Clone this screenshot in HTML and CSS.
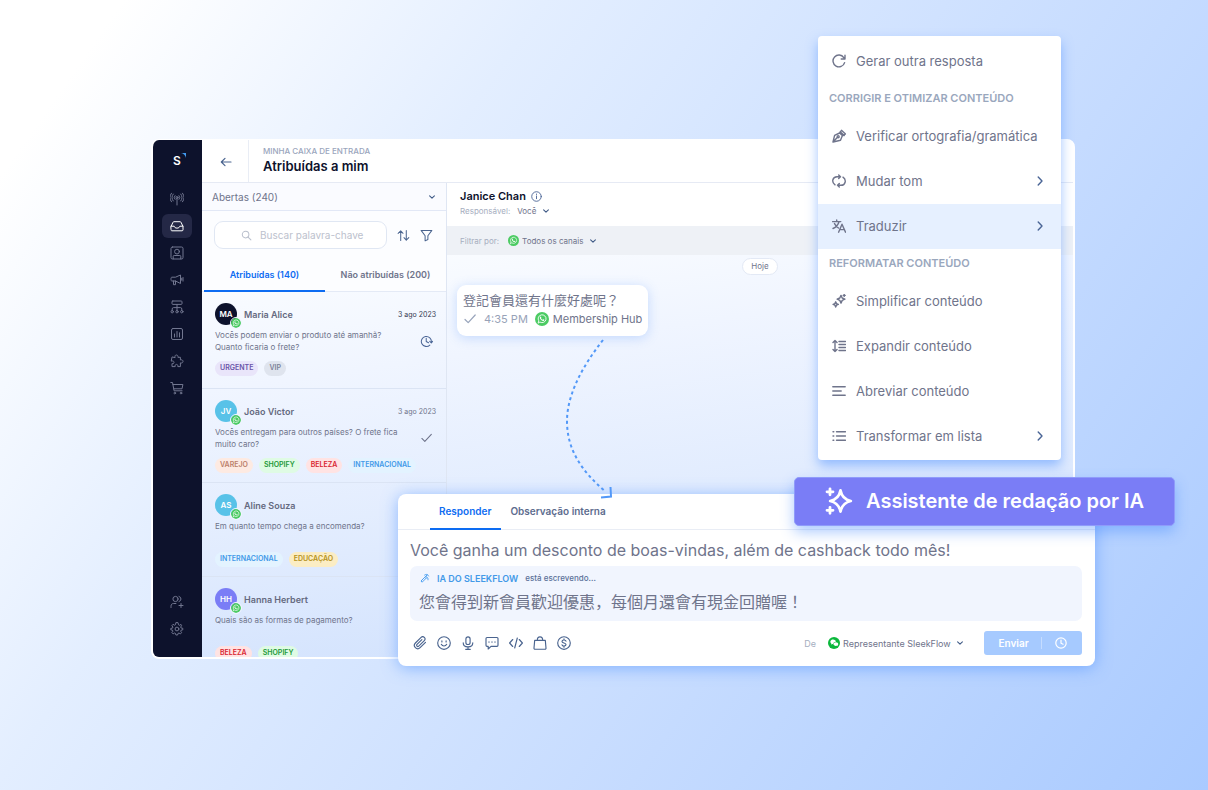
FILE: index.html
```html
<!DOCTYPE html>
<html lang="pt-BR">
<head>
<meta charset="utf-8">
<meta name="viewport" content="width=device-width, initial-scale=1">
<title>Minha caixa de entrada</title>
<link rel="stylesheet" href="styles.css">
</head>
<body>
<svg class="sprite" aria-hidden="true">
  <defs>
    <symbol id="chev-down" viewBox="0 0 8 8"><path d="M1.600 2.900 4 5.200l2.400-2.300"/></symbol>
    <symbol id="chev-right" viewBox="0 0 10 12"><path d="m3.200 2 3.800 4-3.800 4"/></symbol>
    <symbol id="check" viewBox="0 0 14 12"><path d="m2 6.500 3.200 3.200L12.200 2"/></symbol>
    <symbol id="whatsapp" viewBox="0 0 16 16"><circle cx="8" cy="8" r="8" fill="#4ccb63"/><path d="M3.700 12.300l.6-2.200a4.500 4.500 0 1 1 1.700 1.600z" fill="none" stroke="#fff" stroke-width="1"/><path d="M6.100 5.400c.5-.4.8 0 1.100.9.1.3-.4.6-.3.8.4.9 1.100 1.500 1.900 1.800.3.100.6-.6.9-.5.900.400 1.200.6.8 1.200-.6.8-1.600.7-2.700.1-1.200-.7-2.200-1.900-2.300-3 0-.6.2-1 .6-1.300z" fill="#fff"/></symbol>
    <symbol id="clock-next" viewBox="0 0 14 14"><path d="M10.600 10.800A5.400 5.400 0 1 1 12.200 7.600M6.700 3.600V7l2.500 1.400M10.500 6.800l1.700 1.700 1.500-1.800"/></symbol>
  </defs>
</svg>

<main class="scene">
  <div class="workspace">
    <section class="window">
      <nav class="rail" aria-label="Principal">
        <div class="logo"><span>S</span><svg viewBox="0 0 6 6"><path d="M0 0h6v6C5.500 3 3 .5 0 0z" fill="#419af0"/></svg></div>
        <button class="rail-btn" aria-label="Transmissões"><svg viewBox="0 0 14 14"><path d="M3.300 2a5 5 0 0 0 0 7M1.500 1.200a7 7 0 0 0 0 8.600M10.700 2a5 5 0 0 1 0 7M12.500 1.200a7 7 0 0 1 0 8.600M5 3.600a2.700 2.700 0 0 0 0 3.800M9 3.600a2.700 2.700 0 0 1 0 3.800M7 6.500V13"/><circle cx="7" cy="5.500" r="1"/></svg></button>
        <button class="rail-btn active" aria-label="Caixa de entrada"><svg viewBox="0 0 14 14"><path d="M1 7.500 3 3.300c.2-.4.5-.6 1-.6h6c.5 0 .8.200 1 .6l2 4.200v3.300c0 .7-.4 1-1 1H2c-.6 0-1-.3-1-1zM1 7.200h3.200c.2 1.200 1.200 1.900 2.800 1.900s2.600-.7 2.800-1.900H13"/></svg></button>
        <button class="rail-btn" aria-label="Contatos"><svg viewBox="0 0 14 14"><rect x="1" y="1" width="12" height="12" rx="1.500"/><circle cx="7" cy="5.600" r="2.400"/><path d="M3.200 12.800v-2.300c0-.7.3-1 1-1h5.600c.7 0 1 .3 1 1v2.300"/></svg></button>
        <button class="rail-btn" aria-label="Campanhas"><svg viewBox="0 0 14 14"><path d="M1 5.200c0-.6.4-1 1-1h3.500L10.500 2v8.500L5.500 8H2c-.6 0-1-.4-1-1zM3.500 8v3.700h2V8M10.500 5.300h1.300v1.800h-1.300M13 4.500v3.600"/></svg></button>
        <button class="rail-btn" aria-label="Fluxos"><svg viewBox="0 0 14 14"><rect x="2" y="1" width="10" height="3.400" rx=".8"/><path d="M7 4.400v6M2.200 10.500V9c0-.9.4-1.400 1.300-1.400h7c.9 0 1.300.5 1.300 1.400v1.500"/><circle cx="2.200" cy="11.700" r="1.200"/><circle cx="7" cy="11.700" r="1.200"/><circle cx="11.800" cy="11.700" r="1.200"/></svg></button>
        <button class="rail-btn" aria-label="Relatórios"><svg viewBox="0 0 14 14"><rect x="1.500" y="1.500" width="11" height="11" rx="1.500"/><path d="M4.500 10V7M7 10V4.500M9.500 10V5.800"/></svg></button>
        <button class="rail-btn" aria-label="Integrações"><svg viewBox="0 0 14 14"><path d="M5 3.300C4.600 1.900 5.300 1 6.400 1s1.900.9 1.500 2.300h2.500v2.600c1.500-.4 2.600.3 2.600 1.500s-1.100 1.900-2.600 1.500v3.700H7.800c.3-1.300-.2-2.200-1.300-2.200s-1.700.9-1.300 2.200H2v-3c1.400.4 2-.3 2-1.300S3.100 6.700 1.200 7.100L2 3.300z"/></svg></button>
        <button class="rail-btn" aria-label="Comércio"><svg viewBox="0 0 14 14"><path d="M.8 1.500h1.700l1.600 8.300h8M3 3.500h9.900l-.9 4.300H3.800"/><circle cx="4.800" cy="12.100" r=".8"/><circle cx="11" cy="12.100" r=".8"/></svg></button>
        <span class="rail-space"></span>
        <button class="rail-btn" aria-label="Convidar"><svg viewBox="0 0 14 14"><circle cx="5.500" cy="4" r="2.600"/><path d="M1 12.500v-1.200c0-1.900 1-2.800 2.700-2.800h2.200M9 1.400a2.700 2.700 0 0 1 0 5.200M11 8.500v4M9 10.500h4"/></svg></button>
        <button class="rail-btn" aria-label="Configurações"><svg viewBox="0 0 14 14"><path d="m5.800 1-.3 1.700-1 .5L3 2.300 1.900 3.700l1 1.400-.4 1L.8 6.400v1.400l1.700.4.4 1-1 1.400 1.200 1.300 1.500-.9.900.4.400 1.600h1.700l.4-1.600 1-.4 1.400.9 1.200-1.200-.9-1.500.4-1 1.700-.4V6.300l-1.700-.3-.4-1 .9-1.400L11 2.400l-1.400.9-1.100-.5L8.100 1z"/><circle cx="7" cy="7" r="1.900"/></svg></button>
      </nav>

      <div class="main">
        <header class="topbar">
          <button class="back" aria-label="Voltar"><svg viewBox="0 0 12 10"><path d="M11 5H1.500M5 1.300 1.300 5 5 8.700"/></svg></button>
          <div class="title"><span class="eyebrow">MINHA CAIXA DE ENTRADA</span><h1>Atribuídas a mim</h1></div>
        </header>
        <div class="columns">
          <aside class="inbox">
            <label class="status"><select aria-label="Estado"><option>Abertas (240)</option></select><svg class="chev"><use href="#chev-down"/></svg></label>
            <div class="tools">
              <label class="search"><svg viewBox="0 0 12 12"><circle cx="5" cy="5" r="3.600"/><path d="m7.700 7.700 3.100 3.100"/></svg><input type="search" aria-label="Buscar" placeholder="Buscar palavra-chave"></label>
              <button class="tool" aria-label="Ordenar"><svg viewBox="0 0 14 14"><path d="M4 12.500V2M1.200 4.800 4 2l2.500 2.600M10 1.500V12M7.500 9.400 10 12l2.700-2.800"/></svg></button>
              <button class="tool" aria-label="Filtrar"><svg viewBox="0 0 14 14"><path d="M1.200 1.500h11.600L8.500 7.200v4.100L5.500 12.800V7.200z"/></svg></button>
            </div>
            <div class="tabs" role="tablist"><button class="tab on" role="tab">Atribuídas (140)</button><button class="tab" role="tab">Não atribuídas (200)</button></div>
            <div class="list">
              <article class="item unread">
                <div class="who"><span class="avatar navy">MA<svg class="badge"><use href="#whatsapp"/></svg></span><h2>Maria Alice</h2><time>3 ago 2023</time></div>
                <div class="preview"><p>Vocês podem enviar o produto até amanhã?<br>Quanto ficaria o frete?</p><svg class="state"><use href="#clock-next"/></svg></div>
                <div class="tags"><span class="tag purple">URGENTE</span><span class="tag gray">VIP</span></div>
              </article>
              <article class="item">
                <div class="who"><span class="avatar cyan">JV<svg class="badge"><use href="#whatsapp"/></svg></span><h2>João Victor</h2><time>3 ago 2023</time></div>
                <div class="preview"><p>Vocês entregam para outros países? O frete fica<br>muito caro?</p><svg class="state slate"><use href="#check"/></svg></div>
                <div class="tags"><span class="tag orange">VAREJO</span><span class="tag green">SHOPIFY</span><span class="tag red">BELEZA</span><span class="tag blue">INTERNACIONAL</span></div>
              </article>
              <article class="item">
                <div class="who"><span class="avatar cyan">AS<svg class="badge"><use href="#whatsapp"/></svg></span><h2>Aline Souza</h2></div>
                <div class="preview"><p>Em quanto tempo chega a encomenda?</p></div>
                <div class="tags"><span class="tag blue">INTERNACIONAL</span><span class="tag yellow">EDUCAÇÃO</span></div>
              </article>
              <article class="item">
                <div class="who"><span class="avatar violet">HH<svg class="badge"><use href="#whatsapp"/></svg></span><h2>Hanna Herbert</h2></div>
                <div class="preview"><p>Quais são as formas de pagamento?</p></div>
                <div class="tags"><span class="tag red">BELEZA</span><span class="tag green">SHOPIFY</span></div>
              </article>
            </div>
          </aside>

          <section class="chat">
            <header class="chat-head">
              <div class="person"><h2>Janice Chan</h2><svg viewBox="0 0 12 12"><circle cx="6" cy="6" r="5.200"/><path d="M6 5.400v3M6 3.300v.5"/></svg></div>
              <label class="pick"><span>Responsável:</span><select><option>Você</option></select><svg class="chev"><use href="#chev-down"/></svg></label>
            </header>
            <label class="pick filter"><span>Filtrar por:</span><svg class="wa"><use href="#whatsapp"/></svg><select><option>Todos os canais</option></select><svg class="chev"><use href="#chev-down"/></svg></label>
            <div class="thread">
              <span class="day">Hoje</span>
              <article class="bubble">
                <p lang="zh-Hant">登記會員還有什麼好處呢？</p>
                <div class="meta"><svg class="tick"><use href="#check"/></svg><time>4:35 PM</time><svg class="wa"><use href="#whatsapp"/></svg><span>Membership Hub</span></div>
              </article>
            </div>
          </section>
        </div>
      </div>
    </section>

    <svg class="flow" viewBox="0 0 60 170" aria-hidden="true"><path d="M44 6C22 34 8 62 8 87c0 28 14 50 39 71" stroke-dasharray="3 3"/><path d="M42 163.500 52 162.500 51.500 153"/></svg>

    <section class="composer">
      <div class="ctabs" role="tablist"><button class="ctab on" role="tab">Responder</button><button class="ctab" role="tab">Observação interna</button></div>
      <div class="cbody">
        <input class="message" aria-label="Mensagem" value="Você ganha um desconto de boas-vindas, além de cashback todo mês!">
        <div class="draft">
          <div class="ai"><svg viewBox="0 0 12 12"><path d="m1.500 9.300 4.200-4.200 1.400 1.400-4.200 4.200zM5.800 5 7 3.800l1.400 1.400-1.200 1.200M5.500 2.500C7 1.200 9 1.200 10.300 3.600M8.400 5.200c1.200.8 1.300 1.600 1.200 3M7 3.800l1.800-1.700"/></svg><strong>IA DO SLEEKFLOW</strong><span>está escrevendo...</span></div>
          <p>您會得到新會員歡迎優惠，每個月還會有現金回贈喔！</p>
        </div>
        <div class="bar">
          <div class="icons">
            <button aria-label="Anexar"><svg viewBox="0 0 14 14"><path d="m12.500 6.300-5.400 5.400a3.300 3.300 0 0 1-4.700-4.700l5.700-5.600a2.200 2.200 0 0 1 3.200 3.200l-5.600 5.500a1.200 1.200 0 0 1-1.700-1.700l4.900-4.800"/></svg></button>
            <button aria-label="Emoji"><svg viewBox="0 0 14 14"><circle cx="7" cy="7" r="6.300"/><path d="M4.300 8.300c1.200 2.300 4.200 2.300 5.400 0M4.900 4.900v1M9.100 4.900v1"/></svg></button>
            <button aria-label="Áudio"><svg viewBox="0 0 14 14"><rect x="4.900" y=".8" width="4.200" height="7.700" rx="2.100"/><path d="M2.200 6.800c0 5.500 9.600 5.500 9.600 0M7 11v2.300M4.700 13.300h4.600"/></svg></button>
            <button aria-label="Resposta rápida"><svg viewBox="0 0 14 14"><path d="M2 1.500h10c.6 0 1 .4 1 1v6.800c0 .6-.4 1-1 1H6L3.200 13v-2.700H2c-.6 0-1-.4-1-1V2.500c0-.6.4-1 1-1zM4 5.700v.5M7 5.700v.5M10 5.700v.5"/></svg></button>
            <button aria-label="Código"><svg viewBox="0 0 14 14"><path d="M3.700 3.500.6 7l3.100 3.500M10.300 3.500 13.400 7l-3.100 3.500M8.300 2 5.700 12"/></svg></button>
            <button aria-label="Catálogo"><svg viewBox="0 0 14 14"><path d="M1.700 4.300h10.600l.7 7.700c.1.700-.3 1.200-1 1.200H2c-.7 0-1.100-.5-1-1.200zM4.300 4.300c0-4.600 5.400-4.600 5.400 0"/></svg></button>
            <button aria-label="Pagamento"><svg viewBox="0 0 14 14"><circle cx="7" cy="7" r="6.300"/><path d="M9 5.200C8.500 3.500 5 3.700 5 5.500S9 6.800 9 8.600 5.400 10.600 5 8.800M7 2.900v1M7 10.200v1"/></svg></button>
          </div>
          <label class="pick from"><span>De</span><svg class="wechat" viewBox="0 0 12 12"><circle cx="6" cy="6" r="6" fill="#0bb83c"/><path d="M5 2.600c1.700 0 2.900 1 2.900 2.100-1.700 0-2.900 1.200-2.500 2.500-.5.100-.9 0-1.200-.1l-1.100.6.3-1C1.400 5.200 2.500 2.600 5 2.600z" fill="#fff"/><path d="M7.900 5.200c1.400 0 2.400.8 2.400 1.900 0 .6-.3 1.100-.8 1.400l.2.800-.9-.5c-1.800.4-3.300-.5-3.300-1.700 0-1.100 1.100-1.900 2.400-1.900z" fill="#fff"/></svg><select><option>Representante SleekFlow</option></select><svg class="chev"><use href="#chev-down"/></svg></label>
          <div class="send"><button class="send-main">Enviar</button><button class="send-later" aria-label="Agendar"><svg viewBox="0 0 12 12"><circle cx="6" cy="6" r="5.200"/><path d="M6 3v3.200l2.100 1"/></svg></button></div>
        </div>
      </div>
    </section>

    <div class="menu" role="menu">
      <button class="opt" role="menuitem"><svg viewBox="0 0 14 14"><path d="M12.600 8.600A5.900 5.900 0 1 1 11.800 3.600L13 5M13 1.200V5H9.200"/></svg><span>Gerar outra resposta</span></button>
      <h3>CORRIGIR E OTIMIZAR CONTEÚDO</h3>
      <button class="opt" role="menuitem"><svg viewBox="0 0 14 14"><path d="M1 13 2.600 6.300 7.600 4l2.800 2.600L8.500 11.300zM1 13l4.300-4.400M7.600 4l1.900-2.700 4 3.600-3 2M8.200 2.800l4 3.800"/><circle cx="6.200" cy="7.700" r="1"/></svg><span>Verificar ortografia/gramática</span></button>
      <button class="opt" role="menuitem"><svg viewBox="0 0 14 14"><path d="M3 10.800C-.8 8.200.5 2.700 5 2.700h3.500M11 3.200c3.800 2.600 2.500 8.100-2 8.100H5.500M6.700.9l1.800 1.800-1.800 1.800M7.300 9.500l-1.800 1.800 1.800 1.800"/></svg><span>Mudar tom</span><svg class="more"><use href="#chev-right"/></svg></button>
      <button class="opt hot" role="menuitem"><svg viewBox="0 0 14 14"><path d="M.6 2.600h8.200M4.700 1v1.600M7 2.700C6.200 5.700 3.800 8.200 1 9.500M2.500 4.600C3.500 6.500 4.700 7.800 6.500 9M6.600 13.200 10 5.200l3.500 8M7.800 10.600h4.500"/></svg><span>Traduzir</span><svg class="more"><use href="#chev-right"/></svg></button>
      <h3>REFORMATAR CONTEÚDO</h3>
      <button class="opt" role="menuitem"><svg viewBox="0 0 14 14"><path d="M9 1.400 10.200 4l2.700 1.200-2.700 1.200L9 9.100 7.800 6.400 5.100 5.200 7.800 4zM3.700 7.800l.8 1.800 1.800.8-1.800.8-.8 1.800-.8-1.800-1.800-.8 1.800-.8zM12.200.4v2M11.200 1.400h2"/></svg><span>Simplificar conteúdo</span></button>
      <button class="opt" role="menuitem"><svg viewBox="0 0 14 14"><path d="M3 1.500v11M1 3.500l2-2 2 2M1 10.500l2 2 2-2M7 2.500h6.500M7 5.500h6.500M7 8.500h6.500M7 11.500h6.500"/></svg><span>Expandir conteúdo</span></button>
      <button class="opt" role="menuitem"><svg viewBox="0 0 14 14"><path d="M.8 2.800h12.400M.8 7h8.400M.8 11.200h12.400"/></svg><span>Abreviar conteúdo</span></button>
      <button class="opt" role="menuitem"><svg viewBox="0 0 14 14"><path d="M4.500 2.800h9M4.500 7h9M4.500 11.200h9M1 2.800h.8M1 7h.8M1 11.200h.8"/></svg><span>Transformar em lista</span><svg class="more"><use href="#chev-right"/></svg></button>
    </div>

    <div class="banner"><svg viewBox="0 0 28 28"><path d="M15.500 3.500c1.100 5.800 3.700 9 10.300 10.500-6.600 1.500-9.200 4.700-10.300 10.500C14.400 18.700 11.800 15.500 5.200 14 11.800 12.500 14.400 9.300 15.500 3.500z" stroke-width="2.800"/><path d="M5 1.800v6M2 4.800h6M5 20.300v6M2 23.300h6" stroke-width="2.800"/></svg><span>Assistente de redação por IA</span></div>
  </div>
</main>
</body>
</html>
```
FILE: styles.css
```css
* { box-sizing: border-box; }

body {
  margin: 0;
  min-height: 100vh;
  font-family: Inter, "Liberation Sans", "Noto Sans CJK JP", sans-serif;
  font-size: 8px;
  color: #6f748b;
  background: linear-gradient(125deg, #fff 0%, #fff 7%, #e3eeff 31%, #c5dbff 67%, #a9caff 100%);
}

h1, h2, h3, p { margin: 0; font-weight: inherit; }
button, input, select { font: inherit; color: inherit; border: 0; background: none; padding: 0; margin: 0; }
select { appearance: none; }
svg { fill: none; stroke: currentColor; stroke-linecap: round; stroke-linejoin: round; flex: none; }
.sprite { position: absolute; width: 0; height: 0; }
#whatsapp circle { stroke: none; }

.scene { display: flex; min-height: 100vh; padding: 139px 133px 131px 151px; }
.workspace { position: relative; flex: 1; display: flex; min-width: 0; }

.window {
  flex: 1;
  display: flex;
  min-width: 0;
  min-height: 520px;
  border: 2px solid #fff;
  border-top-width: 1px;
  border-radius: 8px;
  overflow: hidden;
  background: linear-gradient(172deg, #fbfdff 20%, #f0f5ff 40%, #e0ebfe 68%, #cbdefd 100%);
}

.rail {
  width: 49px;
  display: flex;
  flex-direction: column;
  align-items: center;
  gap: 3px;
  padding: 13px 2px 16px 0;
  background: #0d122c;
  color: #727790;
}
.logo { display: flex; color: #fff; height: 28px; padding-left: 6px; margin-bottom: 3px; font-size: 12px; line-height: 15px; font-weight: 600; }
.logo svg { width: 5px; height: 5px; stroke: none; }
.rail-btn { width: 30px; height: 24px; display: grid; place-items: center; border-radius: 6px; }
.rail-btn svg { width: 14px; height: 14px; stroke-width: 1; }
.rail-btn.active { background: #242846; color: #fff; }
.rail-space { flex: 1; }

.main { flex: 1; display: flex; flex-direction: column; min-width: 0; }
.topbar { display: flex; height: 43px; background: #fff; border-bottom: 1px solid #e6eaf4; }
.back { width: 47px; display: grid; place-items: center; padding: 1px 0 0 1px; color: #4a648f; border-right: 1px solid #e9edf5; }
.back svg { width: 12px; height: 10px; stroke-width: 1.2; }
.title { display: flex; flex-direction: column; justify-content: center; padding-left: 14px; }
.eyebrow { font-size: 8px; line-height: 10px; color: #9aa5bc; font-weight: 500; }
.title h1 { font-size: 13px; line-height: 20px; font-weight: 600; color: #0d122c; }

.columns { flex: 1; display: grid; grid-template-columns: 245px 1fr; min-height: 0; }
.inbox { display: flex; flex-direction: column; min-height: 0; min-width: 0; border-right: 1px solid #dfe6f3; }
.chev { width: 8px; height: 8px; color: #3f5a86; stroke-width: 1.1; }
.status { display: flex; align-items: center; height: 28px; padding: 0 10px; font-size: 10px; background: #fafbff; border-bottom: 1px solid #e2e8f6; }
.status select { flex: 1; }
.tools { display: flex; align-items: center; gap: 10px; padding: 10px 13px 10px 12px; background: #fcfdff; color: #4a648f; }
.search { flex: 1; min-width: 0; display: flex; align-items: center; gap: 8px; height: 28px; padding-left: 26px; border: 1px solid #e0e7f3; border-radius: 9px; background: #fff; color: #b9bfcc; }
.search svg { width: 11px; height: 11px; stroke-width: 1.1; }
.search input { flex: 1; min-width: 0; font-size: 10px; outline: 0; }
.search input::placeholder { color: #bcc1cd; opacity: 1; }
.tool { width: 13px; height: 13px; }
.tool svg { display: block; width: 13px; height: 13px; stroke-width: 1.1; }
.tabs { display: flex; height: 33px; background: #fcfdff; border-bottom: 1px solid #e4eaf6; padding-left: 2px; }
.tab { flex: 1; height: 33px; font-size: 9px; font-weight: 600; border-bottom: 2px solid transparent; }
.tab.on { color: #0d6cf2; border-color: #0d6cf2; }

.list { flex: 1 1 0; min-height: 0; overflow: hidden; }
.item { padding: 11px 10px 9px 13px; border-bottom: 1px solid #dbe4f4; }
.item.unread { padding-bottom: 12px; }
.who { display: flex; align-items: center; height: 22px; gap: 7px; }
.avatar { position: relative; width: 22px; height: 22px; border-radius: 50%; display: grid; place-items: center; color: #fff; font-size: 8px; font-weight: 600; }
.badge { position: absolute; right: -5px; bottom: -4px; width: 12px; height: 12px; border-radius: 50%; border: 1px solid #f2f6ff; stroke: none; }
.navy { background: #0d122c; }
.cyan { background: #58c2e8; }
.violet { background: #7a7df6; }
.who h2 { flex: 1; font-size: 9px; font-weight: 600; color: #656a80; }
.who time { font-size: 7px; }
.unread time { color: #343a52; }
.preview { display: flex; align-items: center; justify-content: space-between; height: 24px; margin: 4px 3px 8px 0; }
.preview p { align-self: flex-start; line-height: 12px; white-space: nowrap; }
.state { width: 13px; height: 13px; stroke-width: 1.1; color: #4a6596; }
.state.slate { height: 12px; color: #6b7088; }
.tags { display: flex; gap: 6px; }
.tag { height: 15px; line-height: 14px; padding: 0 5px; border-radius: 8px; font-size: 7px; font-weight: 600; }
.purple { background: #e9e5fa; color: #6a54a8; }
.gray { background: #dfe4ee; color: #7b8298; }
.orange { background: #fdeae2; color: #bb806a; }
.green { background: #dffbe4; color: #229838; }
.red { background: #ffe3e3; color: #d92530; }
.blue { background: #e3f3ff; color: #4299e8; }
.yellow { background: #fbedc4; color: #b59220; }

.chat { display: flex; flex-direction: column; min-width: 0; }
.chat-head { height: 43px; padding: 6px 13px; background: #fff; display: flex; flex-direction: column; gap: 1px; }
.person { display: flex; align-items: center; gap: 5px; height: 14px; color: #0d122c; }
.person h2 { font-size: 11px; font-weight: 600; }
.person svg { width: 11px; height: 11px; stroke-width: 1; color: #4a6596; }
.pick { display: flex; align-items: center; gap: 5px; height: 13px; font-size: 8px; }
.pick > span { color: #a6aec0; }
.chat-head .pick > span { margin-right: 2px; }
.pick.filter { height: 29px; padding: 0 13px; background: #eef1f6; }
.filter .wa { width: 11px; height: 11px; margin-left: 4px; }
.filter select { margin-left: -2px; }
.thread { flex: 1; padding: 3px 10px; display: flex; flex-direction: column; align-items: flex-start; }
.day { align-self: center; height: 17px; line-height: 14px; padding: 0 8px; border: 1px solid #e3e9f5; border-radius: 9px; background: #fff; font-size: 8px; }
.bubble { margin-top: 10px; padding: 6px 6px 7px; border-radius: 9px; background: #fff; box-shadow: 0 2px 12px rgba(90,150,250,.3); }
.bubble p { font-size: 13px; line-height: 18px; }
.meta { display: flex; align-items: center; gap: 4px; height: 20px; font-size: 11px; }
.meta time { color: #98a2b8; margin-right: 3px; }
.meta .wa { width: 14px; height: 14px; }
.tick { width: 14px; height: 12px; margin-right: 3px; color: #98a4bb; stroke-width: 1.2; }
.meta .wa, .filter .wa { stroke: none; }

.flow { position: absolute; left: 408px; top: 195px; width: 60px; height: 170px; color: #5298f8; stroke-width: 2; stroke-linecap: butt; stroke-linejoin: miter; z-index: 2; }

.composer { position: absolute; left: 247px; right: -20px; bottom: -7px; border-radius: 8px; background: #fff; box-shadow: 0 2px 16px rgba(70,140,255,.55); overflow: hidden; }
.ctabs { display: flex; height: 36px; padding-left: 32px; border-bottom: 1px solid #e9edf5; }
.ctab { height: 36px; padding: 0 10px 0 9px; font-size: 10px; font-weight: 600; color: #5d6c8e; border-bottom: 2px solid transparent; }
.ctab.on { color: #0d6cf2; border-color: #0d6cf2; }
.cbody { padding: 8px 13px 11px 12px; }
.message { width: 100%; height: 24px; font-size: 16px; outline: 0; display: block; }
.draft { margin-top: 4px; height: 55px; padding: 5px 9px; border-radius: 7px; background: #f1f5fe; }
.ai { display: flex; align-items: center; gap: 7px; height: 14px; font-size: 8px; color: #5b7199; font-weight: 500; padding-left: 1px; }
.ai svg { width: 10px; height: 10px; color: #419af0; stroke-width: 1.1; }
.ai strong { font-size: 9px; font-weight: 600; color: #4299e8; }
.draft p { font-size: 16px; line-height: 34px; }
.bar { display: flex; align-items: center; margin-top: 10px; }
.icons { display: flex; gap: 10px; flex: 1; padding-left: 3px; color: #4a648f; }
.icons button { width: 14px; height: 14px; }
.icons svg { display: block; width: 14px; height: 14px; stroke-width: 1.15; }
.from { font-size: 9px; margin-right: 20px; }
.from > span { margin-right: 7px; }
.wechat { width: 12px; height: 12px; stroke: none; }
.from select { margin-left: -2px; }
.send { display: flex; align-items: center; height: 24px; border-radius: 3px; background: #a6caff; color: #fff; }
.send-main { width: 58px; padding-left: 2px; font-size: 10px; font-weight: 600; border-right: 1px solid #c5dcff; }
.send-later { width: 40px; padding-right: 3px; display: grid; place-items: center; }
.send-later svg { width: 12px; height: 12px; stroke-width: 1.2; }

.menu { position: absolute; right: 14px; top: -103px; width: 243px; padding: 3px 0 1px; border-radius: 4px; background: #fff; box-shadow: 0 6px 12px rgba(70,140,255,.5); }
.menu h3 { height: 30px; line-height: 29px; padding-left: 11px; font-size: 11px; font-weight: 600; color: #9aa7bd; }
.opt { display: flex; align-items: center; gap: 10px; width: 100%; height: 45px; padding: 0 16px 2px 14px; font-size: 13px; text-align: left; }
.opt span { flex: 1; white-space: nowrap; }
.opt svg { width: 14px; height: 14px; stroke-width: 1.4; }
.opt .more { width: 10px; height: 12px; color: #4a6596; }
.opt.hot { background: #e6f0ff; }

.banner { position: absolute; right: -100px; bottom: 133px; width: 381px; height: 49px; display: flex; align-items: center; gap: 13px; padding: 0 0 2px 30px; border-radius: 5px; border: 1px solid #8f9bfa; background: #7a7df6; color: #fff; font-size: 20px; font-weight: 600; white-space: nowrap; box-shadow: 0 6px 14px rgba(70,140,255,.45); }
.banner svg { width: 28px; height: 28px; }
```
